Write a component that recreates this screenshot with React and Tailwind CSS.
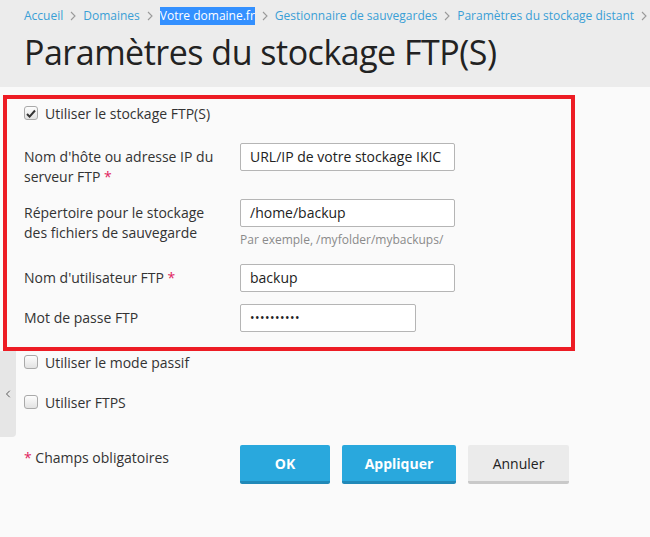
import { ChevronLeft } from 'lucide-react';

const crumbs = ['Accueil', 'Domaines', 'Votre domaine.fr', 'Gestionnaire de sauvegardes', 'Paramètres du stockage distant'];

const Sep = () => (
  <svg width="6" height="10" viewBox="0 0 6 10" className="mx-[7px] shrink-0">
    <path d="M1 1l4 4-4 4" fill="none" stroke="#9a9a9a" strokeWidth="1.1" />
  </svg>
);

const Check = ({ checked }) => (
  <span className="flex h-[14px] w-[14px] shrink-0 items-center justify-center rounded-[3px] border border-[#a9a9a9] bg-gradient-to-b from-[#fdfdfd] to-[#e2e2e2]">
    {checked && (
      <svg width="10" height="9" viewBox="0 0 10 9">
        <path d="M1 5l2.6 2.6L9 1.5" fill="none" stroke="#333" strokeWidth="2" />
      </svg>
    )}
  </span>
);

const CheckRow = ({ label, checked, className = '' }) => (
  <label className={`flex h-5 items-center gap-[7px] ${className}`}>
    <Check checked={checked} />
    <span className="text-[14px] text-[#333]">{label}</span>
  </label>
);

const Input = ({ value, w = 'w-[215px]', password }) => (
  <div className={`flex h-[28px] ${w} items-center overflow-hidden whitespace-nowrap rounded-[2px] border border-[#b5b5b5] bg-white px-[9px] text-[14px] text-[#222]`}>
    {password ? <span className="text-[12px] tracking-[0.5px]">••••••••••</span> : value}
  </div>
);

const Star = () => <span className="text-[#e0245e]"> *</span>;

export default function App() {
  return (
    <div className="relative min-h-[537px] bg-[#fafafa] font-['Open_Sans',sans-serif]">
      <div className="h-[87px] bg-[#ececec] pl-6">
        <div className="flex h-[30px] items-center pt-[1px] text-[12px] text-[#3a9fd6]">
          {crumbs.map((c, i) => (
            <div key={c} className="flex items-center whitespace-nowrap">
              <span className={i === 2 ? 'bg-[#3390ff] text-white' : ''}>{c}</span>
              <Sep />
            </div>
          ))}
        </div>
        <h1 className="mt-[-1px] text-[34px] leading-[46px] tracking-[-0.5px] text-[#222]">Paramètres du stockage FTP(S)</h1>
      </div>

      <div className="ml-[3px] mt-[8px] h-[256px] w-[572px] border-4 border-[#ed1c24] pl-[17px] pt-[4px]">
        <CheckRow label="Utiliser le stockage FTP(S)" checked />
        <div className="mt-5 grid grid-cols-[216px_1fr] gap-y-3 text-[14px] leading-5 text-[#333]">
          <div className="pr-[10px] pt-1">Nom d'hôte ou adresse IP du serveur FTP<Star /></div>
          <div><Input value="URL/IP de votre stockage IKIC" /></div>

          <div className="pr-[10px] pt-1">Répertoire pour le stockage des fichiers de sauvegarde</div>
          <div>
            <Input value="/home/backup" />
            <div className="mt-[5px] text-[12px] leading-4 text-[#8a8a8a]">Par exemple, /myfolder/mybackups/</div>
          </div>

          <div className="mt-1 pr-[10px] pt-1">Nom d'utilisateur FTP<Star /></div>
          <div className="mt-1"><Input value="backup" /></div>

          <div className="pr-[10px] pt-1">Mot de passe FTP</div>
          <div><Input w="w-[176px]" password /></div>
        </div>
      </div>

      <div className="pl-6">
        <CheckRow label="Utiliser le mode passif" className="mt-[1px]" />
        <CheckRow label="Utiliser FTPS" className="mt-5" />
        <div className="mt-[32px] grid grid-cols-[216px_1fr]">
          <div className="pt-[4px] text-[14px] leading-5 text-[#333]"><span className="text-[#e0245e]">*</span> Champs obligatoires</div>
          <div className="flex gap-3 pt-[1px]">
            <button className="h-[39px] w-[90px] rounded-[2px] border-b-[3px] border-[#2189b8] bg-[#29a8dd] text-[14px] font-bold text-white">OK</button>
            <button className="h-[39px] w-[114px] rounded-[2px] border-b-[3px] border-[#2189b8] bg-[#29a8dd] text-[14px] font-bold text-white">Appliquer</button>
            <button className="h-[39px] w-[101px] rounded-[2px] border-b-[3px] border-[#c9c9c9] bg-[#ebebeb] text-[14px] text-[#222]">Annuler</button>
          </div>
        </div>
      </div>

      <div className="absolute left-0 top-[351px] flex h-[86px] w-4 items-center justify-center rounded-br-[4px] bg-[#e6e6e6]">
        <ChevronLeft size={12} strokeWidth={1.6} className="text-[#333]" />
      </div>
    </div>
  );
}
